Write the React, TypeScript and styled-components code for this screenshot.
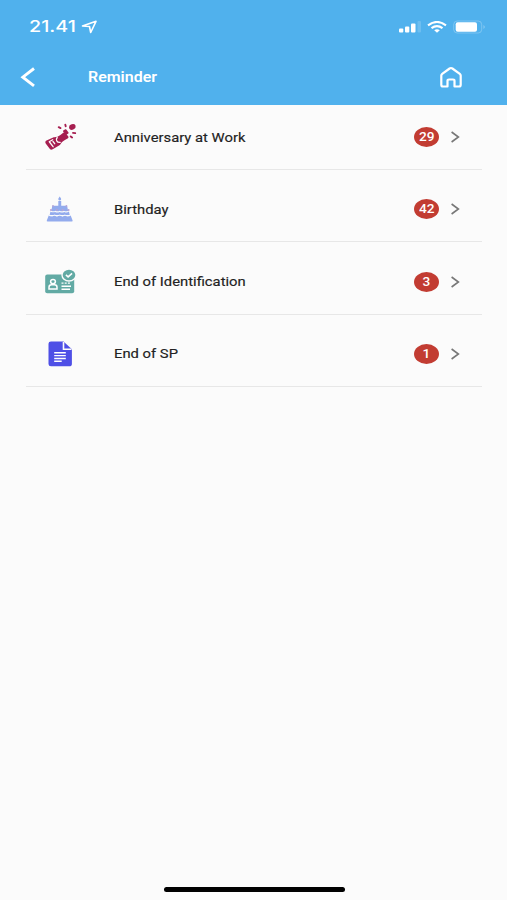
import React from 'react';
import styled, { createGlobalStyle } from 'styled-components';

const GlobalStyle = createGlobalStyle`
  * { box-sizing: border-box; }
  body { margin: 0; background: #fbfbfb; }
`;

const Screen = styled.div`
  width: 507px;
  height: 900px;
  display: flex;
  flex-direction: column;
  background: #fbfbfb;
  font-family: Roboto, "Liberation Sans", sans-serif;
  overflow: hidden;
`;

const Header = styled.header`
  height: 105px;
  flex: none;
  background: #50b1ed;
  color: #fff;
`;

const StatusBar = styled.div`
  height: 51px;
  display: flex;
  align-items: center;
  padding: 2px 21px 0 29px;
`;

const Wide = styled.span<{ $stretch: number }>`
  display: inline-block;
  white-space: nowrap;
  transform: scaleX(${(p) => p.$stretch});
  transform-origin: left center;
`;

const Time = styled.div`
  width: 52px;
  font: 500 15.5px/20px Inter, sans-serif;
`;

const StatusIcons = styled.div`
  margin-left: auto;
  display: flex;
  align-items: center;
  gap: 6px;
`;

const NavBar = styled.div`
  height: 52px;
  display: flex;
  align-items: center;
  padding: 0 44px 0 20px;
`;

const Title = styled.h1`
  margin: 0 auto 0 51px;
  font-size: 14px;
  line-height: 20px;
  font-weight: 600;
`;

const Drawing = styled.svg`
  display: block;
  flex: none;
`;

const List = styled.ul`
  list-style: none;
  margin: 0;
  padding: 0 25px 0 26px;
  display: flex;
  flex-direction: column;
  gap: 7.25px;
  flex: 1;
`;

const Item = styled.li`
  height: 65px;
  display: flex;
  align-items: center;
  border-bottom: 1px solid #e7e7e7;
  padding: 0 22px 0 17px;
`;

const Label = styled.div`
  margin: 0 auto 0 36.5px;
  padding-top: 1px;
  font-size: 13px;
  line-height: 18px;
  font-weight: 400;
  color: #222;
  -webkit-text-stroke: 0.15px #222;
`;

const Badge = styled.div`
  width: 25px;
  height: 20px;
  margin-right: 12px;
  border-radius: 50%;
  background: #c23c32;
  color: #fff;
  font-size: 12px;
  line-height: 20px;
  font-weight: 500;
  display: flex;
  justify-content: center;
`;

const Count = styled.span`
  transform: scaleX(1.14);
`;

const HomeIndicator = styled.div`
  width: 181px;
  height: 5px;
  margin: 0 auto 8px 163.5px;
  border-radius: 3px;
  background: #000;
`;

const Bottle = () => (
  <Drawing width="34" height="34" viewBox="0 0 34 34">
    <g fill="#a61e50">
      <path d="M3 20.8Q1.600 22 2.700 23.500l4 5.300q1.200 1.500 3 .5l7.200-4.200q1.200-3.300 4.600-4.900l3.500-2q1-.7.300-1.600l-3-3.900q-.8-.9-1.700-.2l-3.200 2.600q-3 2.400-6.700 2.200Z" />
      <path d="m20.300 10.600 2-1.300q.6-.4 1 .2l2.200 2.900q.4.600-.2 1l-1.500 1.100q-.6.400-1-.1l-2.700-2.900q-.4-.5.200-.9Z" />
      <path d="M26 7.200Q26 5 28.600 4.300q3-.8 3.800 1.200.8 2.500-1.700 3.800-2.200 1.100-3.600.2Q26 8.700 26 7.200Z" />
    </g>
    <path d="m6.200 21.800 3.500-2M6.500 22l3.600 4.700M10 21.500l1.700 2.200M14.200 17.500q-1.500 2-.5 3.300 1 1.700 3.500 1.500" fill="none" stroke="#fbfbfb" strokeWidth="1.300" strokeLinecap="round" />
    <path d="m15.700 7.200 1.800.9M22.300 4.600l.4 1.700M30 12.900l2.200.2M27.700 16.400l1.400 1" fill="none" stroke="#a61e50" strokeWidth="1.900" strokeLinecap="round" />
  </Drawing>
);

const Cake = () => (
  <Drawing width="34" height="34" viewBox="0 0 34 34">
    <g fill="#93abed">
      <path d="M16.700 4.500q-2 2.200-1.300 3.300.4.700 1.300.7t1.400-.7Q18.700 6.700 16.700 4.500Z" />
      <rect x="15.300" y="9" width="2.900" height="6" />
      <path d="M9.300 13.800h14.800l1 4.900q-2.200 1.300-4.200 0-2 1.300-4.200 0-2 1.300-4.200 0-2 1.300-4.200 0Z" />
      <path d="M7.500 19.500q2 1.500 4.600.4 2.300 1.400 4.600 0 2.300 1.400 4.600 0 2.600 1.200 4.600-.4l.9 3.600H6.600Z" />
      <path d="M5.700 23.400q2.500 1.600 5.300.2 2.800 1.600 5.700 0 2.900 1.600 5.700 0 2.800 1.400 5.300-.2l1.900 5q.3 1.100-.8 1.100H4.600q-1.200 0-.8-1.100Z" />
    </g>
    <path d="M6.500 23.200q3 1.500 5-.1 2.500 1.500 5.200 0 2.700 1.500 5.200 0 2 1.600 5 .1" fill="none" stroke="#fbfbfb" strokeWidth=".9" />
    <g fill="#b7a4d4"><circle cx="8" cy="18" r="1.100" /><circle cx="13.800" cy="18" r="1" /><circle cx="19.700" cy="18" r="1" /><circle cx="25.500" cy="18" r="1.100" /><circle cx="10" cy="14" r=".9" /><circle cx="23.400" cy="14" r=".9" /></g>
  </Drawing>
);

const IdCard = () => (
  <Drawing width="34" height="34" viewBox="0 0 34 34">
    <rect x="2.200" y="9.500" width="29" height="18.800" rx="2" fill="#62aaa4" />
    <ellipse cx="26" cy="10" rx="7.700" ry="6.700" fill="#fbfbfb" />
    <ellipse cx="26" cy="10" rx="6.300" ry="5.300" fill="#62aaa4" />
    <path d="m22.900 9.900 2.200 2 4-3.500" fill="none" stroke="#fff" strokeWidth="1.500" />
    <g fill="none" stroke="#fff" strokeWidth="1.500">
      <ellipse cx="10" cy="16.600" rx="2.400" ry="2.200" />
      <path d="M6 23.900v-1.700q0-2.400 2.500-2.400h3q2.500 0 2.500 2.400v1.700Z" />
      <path d="M18.500 21.200H28M18.500 24.200H27" />
      <path d="M18.500 18.100H27" strokeDasharray="2 1.200" strokeWidth="1.200" />
    </g>
  </Drawing>
);

const Doc = () => (
  <Drawing width="34" height="34" viewBox="0 0 34 34">
    <path d="M8 4.500h12.500l8.400 7.700V27q0 2.300-2.700 2.300H8q-2.500 0-2.500-2.300V6.800Q5.500 4.500 8 4.500Z" fill="#4e4fe6" />
    <path d="M20.500 5v7.200h8" fill="none" stroke="#fbfbfb" strokeWidth="1.600" />
    <path d="M11.200 15.700h11.600M11.200 18.600h11.600M11.200 21.500h11.600M11.200 24.200h7.500" fill="none" stroke="#fff" strokeWidth="1.350" />
  </Drawing>
);

const items = [
  { label: 'Anniversary at Work', count: 29, Icon: Bottle },
  { label: 'Birthday', count: 42, Icon: Cake },
  { label: 'End of Identification', count: 3, Icon: IdCard },
  { label: 'End of SP', count: 1, Icon: Doc },
];

export default function App() {
  return (
    <>
      <GlobalStyle />
      <Screen>
        <Header>
          <StatusBar>
            <Time><Wide $stretch={1.27}>21.41</Wide></Time>
            <Drawing width="17" height="14" viewBox="0 0 17 14">
              <path d="M1.500 6 15 1.300 9.700 12.500 8.500 6.500Z" fill="none" stroke="#fff" strokeWidth="1.600" strokeLinejoin="round" />
            </Drawing>
            <StatusIcons>
              <Drawing width="22" height="12" viewBox="0 0 22 12">
                <g fill="#fff">
                  <rect x="0" y="7.500" width="4.300" height="4" rx="1" />
                  <rect x="6" y="5.500" width="4.300" height="6" rx="1" />
                  <rect x="12" y="2.500" width="4.500" height="9" rx="1" />
                  <rect x="18.500" y="0" width="3.500" height="11.500" rx="1" opacity=".17" />
                </g>
              </Drawing>
              <Drawing width="20" height="12" viewBox="0 0 20 12">
                <g fill="none" stroke="#fff" strokeWidth="2.100">
                  <path d="M1 4.300Q10-2.400 19 4.300" />
                  <path d="M4.500 7.200Q10 3 15.500 7.200" />
                </g>
                <path d="M7.200 9.200Q10 7.400 12.800 9.200L10 11.700Z" fill="#fff" />
              </Drawing>
              <Drawing width="33" height="14" viewBox="0 0 33 14">
                <rect x=".7" y="1" width="28" height="12" rx="3.500" fill="none" stroke="#fff" opacity=".25" />
                <rect x="2.700" y="2.300" width="21.300" height="9.400" rx="2" fill="#fff" />
                <path d="M30.500 5q2.500 2 0 4Z" fill="#fff" opacity=".35" />
              </Drawing>
            </StatusIcons>
          </StatusBar>
          <NavBar>
            <Drawing width="17" height="22" viewBox="0 0 17 22">
              <path d="M14 2.500 2.800 11.200l11.200 8.700" fill="none" stroke="#fff" strokeWidth="2.900" />
            </Drawing>
            <Title><Wide $stretch={1.14}>Reminder</Wide></Title>
            <Drawing width="24" height="22" viewBox="0 0 24 22">
              <path d="M2.300 9.600Q2.300 8.600 3.200 7.900L10.600 2.500Q12 1.500 13.400 2.500L20.800 7.900Q21.700 8.600 21.700 9.600V18.700Q21.700 20.500 20 20.500H15.500V14.700Q15.500 13.500 14 13.500H10Q8.500 13.500 8.500 14.700V20.500H4Q2.300 20.500 2.300 18.700Z" fill="none" stroke="#fff" strokeWidth="2.200" strokeLinejoin="round" />
            </Drawing>
          </NavBar>
        </Header>
        <List>
          {items.map(({ label, count, Icon }) => (
            <Item key={label}>
              <Icon />
              <Label><Wide $stretch={1.138}>{label}</Wide></Label>
              <Badge><Count>{count}</Count></Badge>
              <Drawing width="9" height="12" viewBox="0 0 9 12">
                <path d="M.6 1 7.400 6 .6 11" fill="none" stroke="#777" strokeWidth="1.600" />
              </Drawing>
            </Item>
          ))}
        </List>
        <HomeIndicator />
      </Screen>
    </>
  );
}
